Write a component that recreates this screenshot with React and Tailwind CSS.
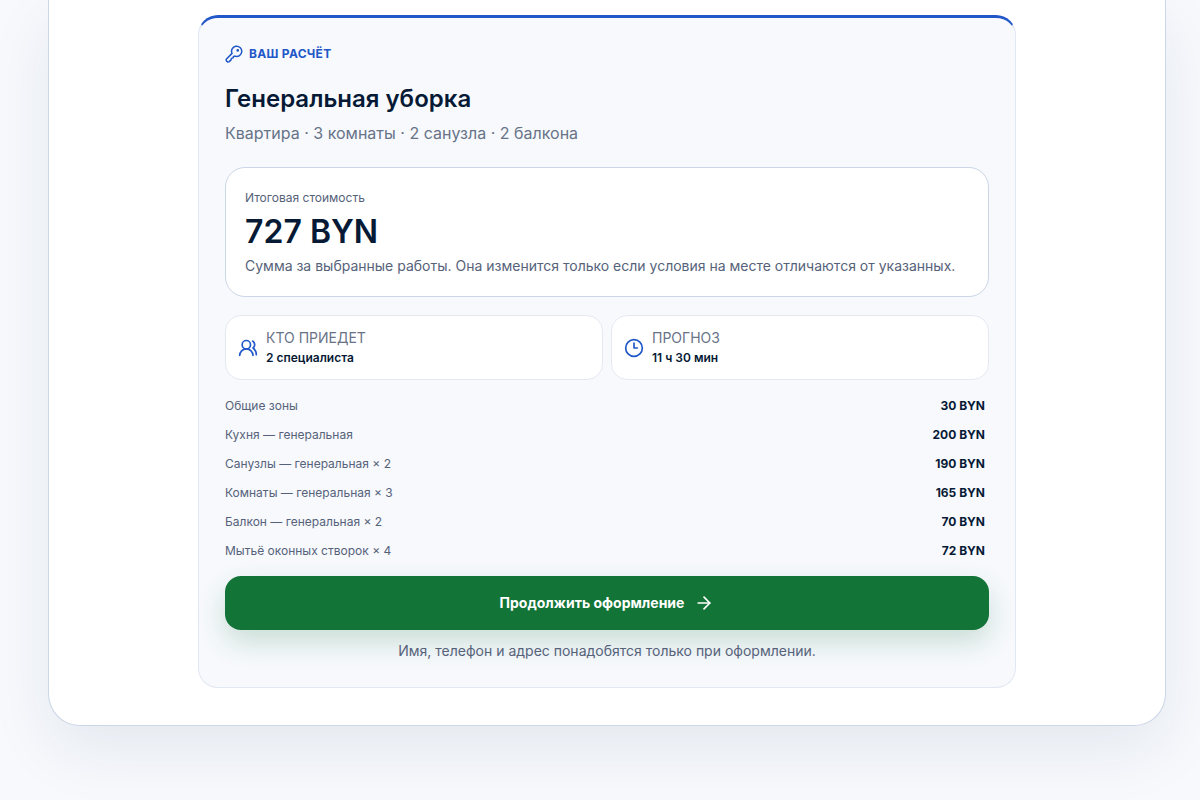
import { ArrowRight, Clock3, UsersRound } from 'lucide-react'

const facts = [
  { label: 'КТО ПРИЕДЕТ', value: '2 специалиста', icon: UsersRound },
  { label: 'ПРОГНОЗ', value: '11 ч 30 мин', icon: Clock3 },
]

const rows = [
  { name: 'Общие зоны', price: '30 BYN' },
  { name: 'Кухня — генеральная', price: '200 BYN' },
  { name: 'Санузлы — генеральная × 2', price: '190 BYN' },
  { name: 'Комнаты — генеральная × 3', price: '165 BYN' },
  { name: 'Балкон — генеральная × 2', price: '70 BYN' },
  { name: 'Мытьё оконных створок × 4', price: '72 BYN' },
]

function KeyIcon({ className }) {
  return (
    <svg
      className={className}
      viewBox="0 0 24 24"
      fill="none"
      stroke="currentColor"
      strokeWidth={2}
      strokeLinecap="round"
      strokeLinejoin="round"
      aria-hidden="true"
    >
      <path d="M9.4 11.2A6.8 6.8 0 1 1 13.4 14.8L11.5 15.2L10.7 17.2L8.6 17.8L8 19.8L5.6 22.2Q4.4 23 3.1 22.3L1.9 21.2Q1.2 19.8 2 18.7Z" />
      <circle cx="17" cy="7.2" r="0.8" fill="currentColor" />
    </svg>
  )
}

function FactCard({ label, value, icon: Icon }) {
  return (
    <div className="flex items-center gap-2 rounded-2xl border border-[#e4e9f1] bg-white px-3 pt-3 pb-[11px]">
      <Icon className="size-5 text-[#2157c8]" strokeWidth={2} aria-hidden="true" />
      <div>
        <p className="text-sm leading-5 text-[#687387]">{label}</p>
        <p className="text-xs leading-5 font-semibold text-[#071a35]">{value}</p>
      </div>
    </div>
  )
}

function Summary() {
  return (
    <section className="mx-auto max-w-[818px] rounded-[20px] border border-t-[3px] border-[#e2e8f1] border-t-[#2157c8] bg-[#f7f9fd] px-[26px] pt-[22px] pb-[26px]">
      <div className="flex h-7 items-center gap-1.5 text-[#2157c8]">
        <KeyIcon className="size-[18px]" />
        <span className="text-xs font-bold tracking-wide">ВАШ РАСЧЁТ</span>
      </div>

      <h2 className="mt-[15px] text-2xl leading-8 font-semibold text-[#071a35]">Генеральная уборка</h2>
      <p className="mt-1 text-base leading-7 text-[#687387]">Квартира · 3 комнаты · 2 санузла · 2 балкона</p>

      {/* Итог */}
      <div className="mt-5 rounded-[20px] border border-[#cbd6e6] bg-white px-[19px] py-5">
        <p className="text-xs leading-5 text-[#56627a]">Итоговая стоимость</p>
        <p className="text-[32px] leading-[48px] font-semibold text-[#071a35]">727 BYN</p>
        <p className="text-sm leading-5 text-[#56627a]">
          Сумма за выбранные работы. Она изменится только если условия на месте отличаются от указанных.
        </p>
      </div>

      <div className="mt-[18px] grid grid-cols-2 gap-2">
        {facts.map((fact) => (
          <FactCard key={fact.label} {...fact} />
        ))}
      </div>

      {/* Состав расчёта */}
      <table className="mt-[11px] w-full text-xs leading-5">
        <tbody>
          {rows.map((row) => (
            <tr key={row.name} className="h-[29px]">
              <th scope="row" className="text-left font-normal text-[#56627a]">{row.name}</th>
              <td className="pr-1 text-right font-bold text-[#071a35]">{row.price}</td>
            </tr>
          ))}
        </tbody>
      </table>

      <button
        type="button"
        className="mt-[11px] flex h-[54px] w-full items-center justify-center gap-2.5 rounded-2xl bg-[#127436] text-sm font-bold text-white shadow-[0_12px_28px_rgba(18,116,54,0.2)]"
      >
        Продолжить оформление
        <ArrowRight className="size-5" strokeWidth={2} aria-hidden="true" />
      </button>
      <p className="mt-[11px] text-center text-sm leading-5 text-[#56627a]">
        Имя, телефон и адрес понадобятся только при оформлении.
      </p>
    </section>
  )
}

export default function App() {
  return (
    <main className="min-h-screen overflow-hidden bg-[#f7f9fd] pr-[34px] pb-[74px] pl-12 font-['Inter','Liberation_Sans',sans-serif]">
      <div className="rounded-b-[32px] border border-t-0 border-[#cbd6e6] bg-white px-6 pt-[15px] pb-[37px] shadow-[0_24px_64px_rgba(15,35,65,0.08)]">
        <Summary />
      </div>
    </main>
  )
}
